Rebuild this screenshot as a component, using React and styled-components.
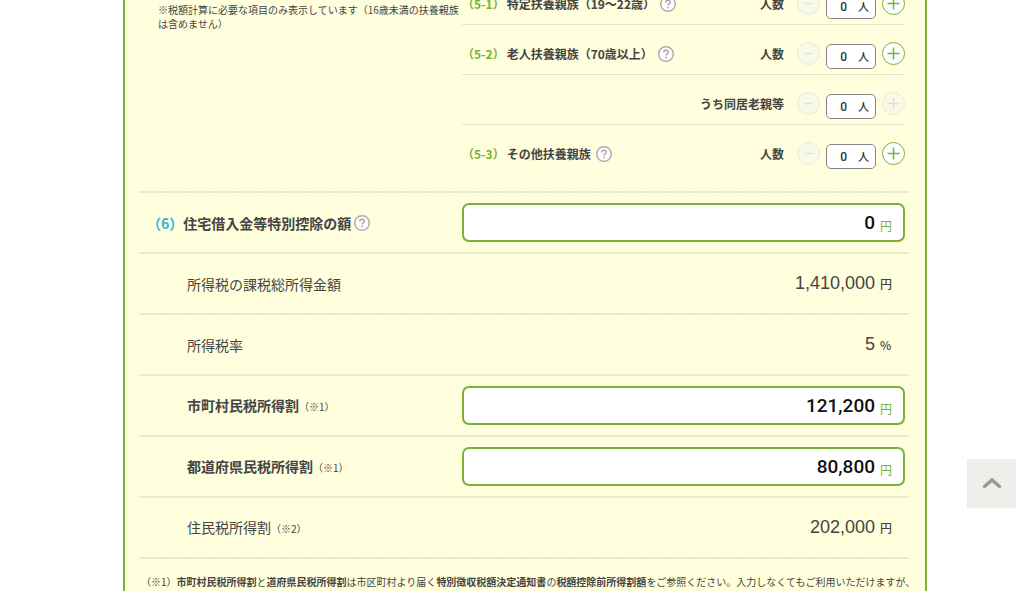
import React, { useState } from "react";
import styled, { createGlobalStyle } from "styled-components";

const green = "#79b236";

const GlobalStyle = createGlobalStyle`
  *, *::before, *::after { box-sizing: border-box; }
  body {
    margin: 0;
    background: #fff;
    color: #444;
    font-family: "Noto Sans CJK JP", sans-serif;
    font-size: 14px;
    line-height: 20px;
  }
  button, input { font: inherit; color: inherit; }
`;

const Page = styled.main`
  display: flex;
  height: 100vh;
  overflow: hidden;
  padding: 0 97px 0 123px;
`;

const Panel = styled.form`
  flex: 1;
  min-width: 0;
  height: max-content;
  min-height: 100%;
  padding: 0 15px 0 14px;
  border: solid ${green};
  border-width: 0 2px;
  background: #fffedd;
`;

const Row = styled.section`
  display: grid;
  grid-template-columns: 323px 1fr;
  align-items: ${(p) => (p.$top ? "start" : "center")};
  min-height: 61px;
  padding: 0 5px 2px 0;
  background: repeating-linear-gradient(90deg, #e3e7c6 0 2px, #fbfad8 2px 3px) bottom / 100% 2px no-repeat;
`;

const Dependents = styled(Row)`
  margin-top: -25px;
  padding-bottom: 18px;
`;

const Note = styled.p`
  margin: 0;
  padding: 28px 0 0 19px;
  font-size: 10px;
  line-height: 14px;
  white-space: nowrap;
`;

const CountRow = styled.div`
  display: flex;
  align-items: center;
  height: 50px;
  padding-top: 8px;
  border-bottom: 1px solid ${(p) => (p.$last ? "transparent" : "#e6e6cc")};
  font-size: 12px;
  font-weight: 700;
  white-space: nowrap;
`;

const CountTitle = styled.div`
  display: flex;
  align-items: center;
  flex: 1;
  gap: 2px;
`;

const Code = styled.span`
  color: ${(p) => (p.$blue ? "#36b4e5" : green)};
`;

const HelpButton = styled.button`
  display: flex;
  margin-left: 2px;
  padding: 0;
  border: 0;
  background: none;
`;

const CountLabel = styled.label`
  margin-right: 13px;
`;

const RoundButton = styled.button`
  display: grid;
  place-items: center;
  width: 23px;
  height: 23px;
  padding: 0;
  border: 1px solid ${green};
  border-radius: 50%;
  background: #fff;
  color: ${green};
  &:disabled {
    border-color: #e9eadb;
    background: #f9f9e9;
    color: #dfe0d0;
  }
`;

const CountBox = styled.div`
  display: flex;
  align-items: center;
  width: 50px;
  height: 25px;
  margin: 6px 6px 0;
  padding: 0 6px 2px 0;
  border: 1px solid #858585;
  border-radius: 5px;
  background: #fff;
  color: #333;
  font-size: 11px;
  font-weight: 500;
`;

const CountInput = styled.input`
  width: 100%;
  min-width: 0;
  padding: 2px 11px 0 0;
  border: 0;
  outline: 0;
  background: none;
  font-family: Roboto, sans-serif;
  font-size: 12px;
  text-align: right;
`;

const RowLabel = styled.label`
  display: flex;
  align-items: baseline;
  padding-left: ${(p) => (p.$coded ? 8 : 48)}px;
  font-weight: ${(p) => (p.$bold ? 700 : 400)};
  small { font-size: 10px; font-weight: 400; }
`;

const RowTitle = styled.div`
  display: flex;
  align-items: center;
`;

const Amount = styled.div`
  display: flex;
  align-items: baseline;
  gap: 5px;
  height: 39px;
  padding: 0 11px;
  border: 2px solid ${(p) => (p.$field ? green : "transparent")};
  border-radius: 7px;
  background: ${(p) => (p.$field ? "#fff" : "none")};
  line-height: 35px;
`;

const AmountInput = styled.input`
  flex: 1;
  min-width: 0;
  height: 35px;
  padding: 0;
  border: 0;
  outline: 0;
  background: none;
  color: #111;
  font-family: Roboto, sans-serif;
  font-size: 19px;
  font-weight: 500;
  text-align: right;
`;

const AmountValue = styled.output`
  flex: 1;
  font-family: "Liberation Sans", sans-serif;
  font-size: 18px;
  text-align: right;
`;

const Unit = styled.span`
  width: 12px;
  color: #444;
  font-size: 12px;
  font-weight: 500;
`;

const FieldUnit = styled(Unit)`
  align-self: flex-start;
  padding-top: 3px;
  color: ${green};
  font-weight: 400;
`;

const Footnote = styled.p`
  margin: 0;
  padding: 16px 0 0 2px;
  font-size: 10px;
  line-height: 14px;
  white-space: nowrap;
`;

const TopLink = styled.a`
  position: fixed;
  right: 8px;
  bottom: 83px;
  display: grid;
  place-items: center;
  width: 49px;
  height: 49px;
  background: #eeeeeb;
`;

function Help() {
  return (
    <HelpButton type="button" aria-label="ヘルプ">
      <svg width="18" height="18" viewBox="0 0 18 18" fill="none">
        <circle cx="9" cy="9" r="7.3" fill="#fffef8" stroke="#b0acb2" strokeWidth="1.5" />
        <path d="M6.7 7.4C6.7 6 7.7 5.2 9 5.2s2.3.8 2.3 2c0 1.7-2.2 1.7-2.2 3.3" stroke="#aaa6ac" strokeWidth="1.4" />
        <circle cx="9.1" cy="12.5" r=".9" fill="#aaa6ac" />
      </svg>
    </HelpButton>
  );
}

function Sign({ plus }) {
  return (
    <svg width="13" height="13" viewBox="0 0 13 13" stroke="currentColor" strokeWidth="1.5">
      <path d={plus ? "M.5 6.5h12M6.5.5v12" : "M2.5 6.5h8"} />
    </svg>
  );
}

function Counter({ id, code, title, label, locked, last }) {
  const [count, setCount] = useState(0);
  return (
    <CountRow $last={last}>
      <CountTitle>
        {code && <Code>（{code}）</Code>}
        {title}
        {title && <Help />}
      </CountTitle>
      <CountLabel htmlFor={id}>{label}</CountLabel>
      <RoundButton type="button" aria-label="減らす" disabled={count === 0} onClick={() => setCount(count - 1)}>
        <Sign />
      </RoundButton>
      <CountBox>
        <CountInput id={id} value={count} readOnly />
        人
      </CountBox>
      <RoundButton type="button" aria-label="増やす" disabled={locked} onClick={() => setCount(count + 1)}>
        <Sign plus />
      </RoundButton>
    </CountRow>
  );
}

function AmountRow({ id, code, title, mark, value, unit = "円", field }) {
  return (
    <Row>
      <RowTitle>
        <RowLabel htmlFor={id} $coded={!!code} $bold={field}>
          {code && <Code $blue>（{code}）</Code>}
          {title}
          {mark && <small>（{mark}）</small>}
        </RowLabel>
        {code && <Help />}
      </RowTitle>
      <Amount $field={field}>
        {field ? <AmountInput id={id} defaultValue={value} /> : <AmountValue id={id}>{value}</AmountValue>}
        {field ? <FieldUnit>{unit}</FieldUnit> : <Unit>{unit}</Unit>}
      </Amount>
    </Row>
  );
}

export default function App() {
  return (
    <>
      <GlobalStyle />
      <Page>
        <Panel>
          <Dependents $top>
            <Note>
              ※税額計算に必要な項目のみ表示しています（16歳未満の扶養親族
              <br />
              は含めません）
            </Note>
            <div>
              <Counter id="specific" code="5-1" title="特定扶養親族（19〜22歳）" label="人数" />
              <Counter id="elderly" code="5-2" title="老人扶養親族（70歳以上）" label="人数" />
              <Counter id="cohabiting" label="うち同居老親等" locked />
              <Counter id="other" code="5-3" title="その他扶養親族" label="人数" last />
            </div>
          </Dependents>
          <AmountRow id="housing" code="6" title="住宅借入金等特別控除の額" value="0" field />
          <AmountRow id="taxable" title="所得税の課税総所得金額" value="1,410,000" />
          <AmountRow id="rate" title="所得税率" value="5" unit="%" />
          <AmountRow id="city" title="市町村民税所得割" mark="※1" value="121,200" field />
          <AmountRow id="prefecture" title="都道府県民税所得割" mark="※1" value="80,800" field />
          <AmountRow id="resident" title="住民税所得割" mark="※2" value="202,000" />
          <Footnote>
            （※1）<b>市町村民税所得割</b>と<b>道府県民税所得割</b>は市区町村より届く<b>特別徴収税額決定通知書</b>の
            <b>税額控除前所得割額</b>をご参照ください。入力しなくてもご利用いただけますが、
          </Footnote>
        </Panel>
      </Page>
      <TopLink href="#root" aria-label="ページの先頭へ">
        <svg width="22" height="16" viewBox="0 0 22 16" fill="none" stroke="#999" strokeWidth="3.4" strokeLinecap="round">
          <path d="M3.5 10.5 11 4l7.500 6.500" />
        </svg>
      </TopLink>
    </>
  );
}
